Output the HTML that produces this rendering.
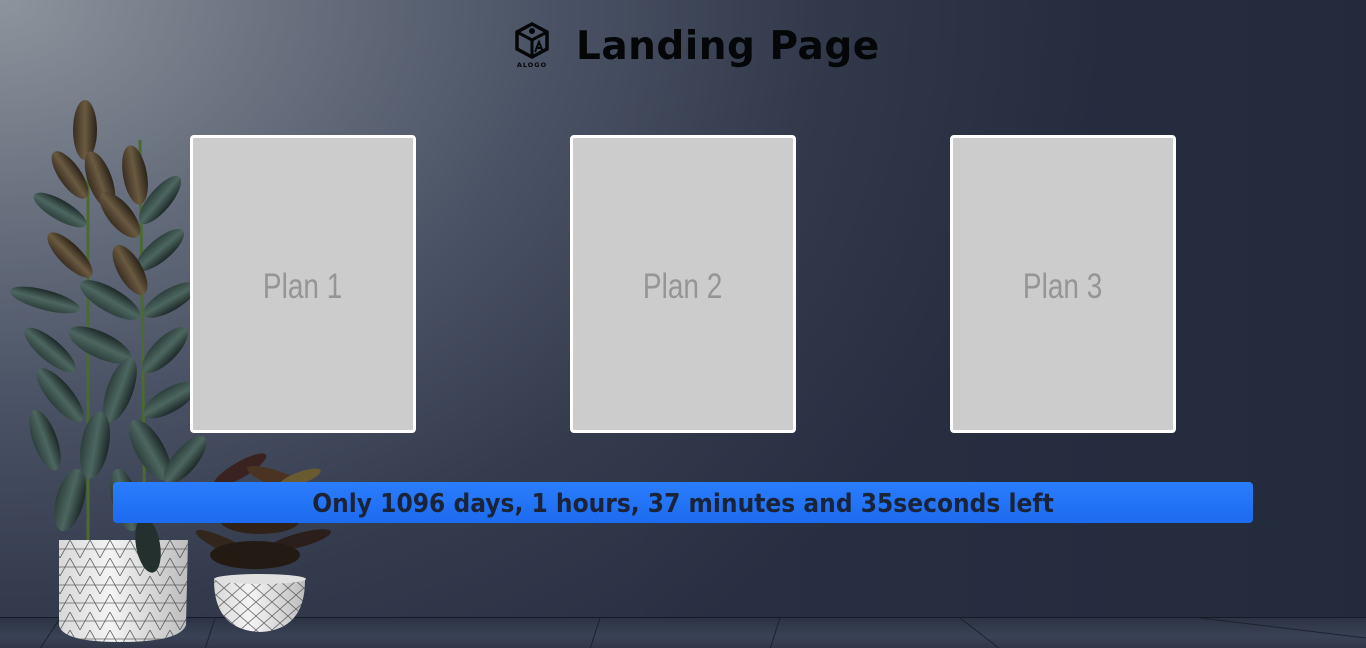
<!DOCTYPE html>
<html><head><meta charset="utf-8"><style>
html,body{margin:0;padding:0;width:1366px;height:648px;overflow:hidden}
body{position:relative;font-family:"Liberation Sans",sans-serif;
background:radial-gradient(ellipse 1100px 800px at 0px 0px,#8d949d 0%,#6a7280 25%,#4a5365 50%,#333b4d 75%,#293043 100%);}
.wall2{position:absolute;left:0;top:0;width:1366px;height:620px;background:linear-gradient(90deg,rgba(0,0,0,0) 0%,rgba(0,0,0,0) 45%,rgba(20,26,40,.25) 100%)}
.floor{position:absolute;left:0;top:617px;width:1366px;height:31px;background:linear-gradient(180deg,#2b3344,#3a4356 60%,#2f3648);border-top:1px solid #141a26}
.title{position:absolute;left:576px;top:24px;font-family:"DejaVu Sans",sans-serif;font-weight:bold;font-size:39px;color:#050608;letter-spacing:0.5px}
.logo{position:absolute;left:512px;top:22px;width:40px;height:48px}
.card{position:absolute;top:135px;width:220px;height:292px;background:#cccccc;border:3px solid #fff;border-radius:4px;display:flex;align-items:center;justify-content:center;color:#959595;font-size:35px;box-sizing:content-box}
.card span{display:inline-block;transform:scaleX(.8);margin-top:6px}
.bar{position:absolute;left:113px;top:482px;width:1140px;height:41px;border-radius:4px;background:linear-gradient(180deg,#2a7dfd,#1d6bf0);text-align:center;line-height:44px;font-family:"DejaVu Sans",sans-serif;font-weight:bold;font-size:26px;color:#1b2336}
.bar span{display:inline-block;transform:scaleX(.9);white-space:nowrap}
svg.plant{position:absolute;left:0;top:0}
</style></head><body>
<div class="wall2"></div>
<div class="floor">
<svg width="1366" height="31" style="position:absolute;left:0;top:0"><path d="M40 31L60 0M205 31L215 0M590 31L600 0M770 31L780 0M1000 31L960 0M1366 20L1200 0" stroke="#1c2230" stroke-width="1"/></svg>
</div>

<svg class="plant" width="340" height="648" viewBox="0 0 340 648">
 <defs>
  <linearGradient id="lf" x1="0" x2="1"><stop offset="0" stop-color="#2d3f3c"/><stop offset=".5" stop-color="#4d6660"/><stop offset="1" stop-color="#1c2827"/></linearGradient>
  <linearGradient id="lb" x1="0" x2="1"><stop offset="0" stop-color="#3a2e22"/><stop offset=".5" stop-color="#6a5a40"/><stop offset="1" stop-color="#2a2218"/></linearGradient>
  <linearGradient id="pot" x1="0" x2="1"><stop offset="0" stop-color="#d8d8d8"/><stop offset=".4" stop-color="#f4f4f4"/><stop offset="1" stop-color="#bdbdbd"/></linearGradient>
  <pattern id="tri" width="20" height="18" patternUnits="userSpaceOnUse"><path d="M0 18L10 0L20 18M0 9H20" stroke="#444" stroke-width=".8" fill="none"/></pattern>
  <pattern id="dia" width="16" height="14" patternUnits="userSpaceOnUse"><path d="M0 0L16 14M16 0L0 14" stroke="#444" stroke-width=".8" fill="none"/></pattern>
 </defs>
 <g>
  <ellipse cx="240" cy="470" rx="30" ry="8" fill="#3a2220" transform="rotate(-30 240 470)"/>
  <ellipse cx="280" cy="480" rx="35" ry="8" fill="#4a3320" transform="rotate(20 280 480)"/>
  <ellipse cx="300" cy="540" rx="32" ry="7" fill="#2a1f1a" transform="rotate(-15 300 540)"/>
  <ellipse cx="225" cy="545" rx="32" ry="7" fill="#33261c" transform="rotate(25 225 545)"/>
  <ellipse cx="260" cy="520" rx="40" ry="14" fill="#2e2219"/>
  <ellipse cx="255" cy="555" rx="45" ry="14" fill="#241a14"/>
  <ellipse cx="300" cy="478" rx="22" ry="6" fill="#6a5a30" transform="rotate(-20 300 478)"/>
 </g>
 <path d="M214 580 Q214 630 260 632 Q305 630 305 580 Z" fill="url(#pot)"/>
 <path d="M214 580 Q214 630 260 632 Q305 630 305 580 Z" fill="url(#dia)" opacity=".8"/>
 <ellipse cx="260" cy="579" rx="46" ry="5" fill="#e0e0e0"/>
 <path d="M88 130 L88 540 M140 140 L145 540" stroke="#4a6a30" stroke-width="3" fill="none"/>
 <g>
  <ellipse cx="85" cy="130" rx="12" ry="30" fill="url(#lb)"/>
  <ellipse cx="70" cy="175" rx="11" ry="28" fill="url(#lb)" transform="rotate(-35 70 175)"/>
  <ellipse cx="100" cy="180" rx="12" ry="30" fill="url(#lb)" transform="rotate(-20 100 180)"/>
  <ellipse cx="135" cy="175" rx="12" ry="30" fill="url(#lb)" transform="rotate(-10 135 175)"/>
  <ellipse cx="160" cy="200" rx="11" ry="30" fill="url(#lf)" transform="rotate(40 160 200)"/>
  <ellipse cx="60" cy="210" rx="10" ry="30" fill="url(#lf)" transform="rotate(-60 60 210)"/>
  <ellipse cx="120" cy="215" rx="12" ry="28" fill="url(#lb)" transform="rotate(-40 120 215)"/>
  <ellipse cx="70" cy="255" rx="11" ry="30" fill="url(#lb)" transform="rotate(-45 70 255)"/>
  <ellipse cx="160" cy="250" rx="11" ry="30" fill="url(#lf)" transform="rotate(50 160 250)"/>
  <ellipse cx="130" cy="270" rx="12" ry="28" fill="url(#lb)" transform="rotate(-30 130 270)"/>
  <ellipse cx="45" cy="300" rx="10" ry="36" fill="url(#lf)" transform="rotate(-75 45 300)"/>
  <ellipse cx="110" cy="300" rx="12" ry="34" fill="url(#lf)" transform="rotate(-60 110 300)"/>
  <ellipse cx="170" cy="300" rx="11" ry="30" fill="url(#lf)" transform="rotate(60 170 300)"/>
  <ellipse cx="50" cy="350" rx="11" ry="32" fill="url(#lf)" transform="rotate(-50 50 350)"/>
  <ellipse cx="100" cy="345" rx="13" ry="34" fill="url(#lf)" transform="rotate(-65 100 345)"/>
  <ellipse cx="165" cy="350" rx="12" ry="30" fill="url(#lf)" transform="rotate(45 165 350)"/>
  <ellipse cx="60" cy="395" rx="12" ry="34" fill="url(#lf)" transform="rotate(-40 60 395)"/>
  <ellipse cx="120" cy="390" rx="13" ry="34" fill="url(#lf)" transform="rotate(20 120 390)"/>
  <ellipse cx="170" cy="400" rx="12" ry="30" fill="url(#lf)" transform="rotate(60 170 400)"/>
  <ellipse cx="45" cy="440" rx="12" ry="32" fill="url(#lf)" transform="rotate(-20 45 440)"/>
  <ellipse cx="95" cy="445" rx="14" ry="34" fill="url(#lf)" transform="rotate(10 95 445)"/>
  <ellipse cx="150" cy="450" rx="14" ry="34" fill="url(#lf)" transform="rotate(-30 150 450)"/>
  <ellipse cx="185" cy="460" rx="12" ry="30" fill="url(#lf)" transform="rotate(40 185 460)"/>
  <ellipse cx="70" cy="500" rx="14" ry="32" fill="url(#lf)" transform="rotate(15 70 500)"/>
  <ellipse cx="125" cy="500" rx="13" ry="32" fill="url(#lf)" transform="rotate(-15 125 500)"/>
 </g>
 <path d="M59 540 L59 625 Q62 642 120 642 Q180 642 186 625 L188 540 Z" fill="url(#pot)"/>
 <path d="M59 540 L59 625 Q62 642 120 642 Q180 642 186 625 L188 540 Z" fill="url(#tri)" opacity=".8"/>
 <ellipse cx="148" cy="545" rx="12" ry="28" fill="#23302d" transform="rotate(-10 148 545)"/>
</svg>

<svg class="logo" viewBox="0 0 40 48">
 <path d="M20 2 L35 10 L35 27 L20 35 L5 27 L5 10 Z" fill="none" stroke="#050608" stroke-width="3.5"/>
 <path d="M5 10 L20 18 L35 10 M20 18 L20 35" stroke="#050608" stroke-width="3" fill="none"/>
 <circle cx="20" cy="9" r="3" fill="#050608"/>
 <path d="M23 30 L27 20 L31 30 M24.5 26 H29.5" stroke="#050608" stroke-width="2" fill="none"/>
 <text x="20" y="45" text-anchor="middle" font-family="DejaVu Sans" font-weight="bold" font-size="6.5" fill="#050608" letter-spacing="1">ALOGO</text>
</svg>
<div class="title">Landing Page</div>

<div class="card" style="left:190px"><span>Plan 1</span></div>
<div class="card" style="left:570px"><span>Plan 2</span></div>
<div class="card" style="left:950px"><span>Plan 3</span></div>

<div class="bar"><span>Only 1096 days, 1 hours, 37 minutes and 35seconds left</span></div>
</body></html>
